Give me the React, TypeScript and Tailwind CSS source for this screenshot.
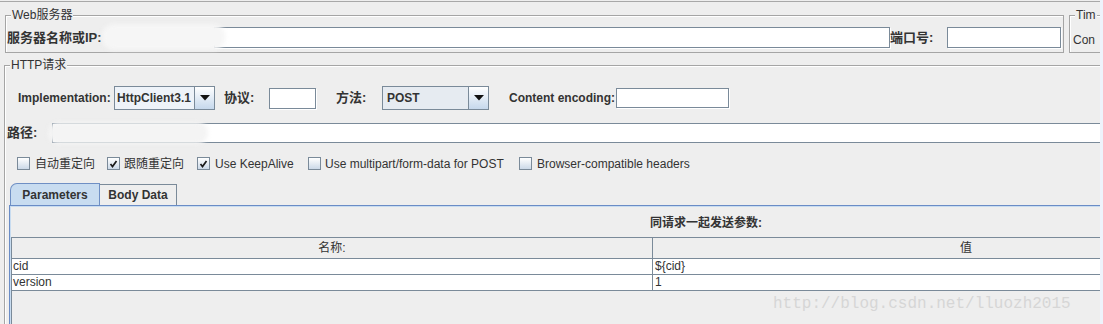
import React from "react";

function Check({ checked }: { checked?: boolean }) {
  return (
    <span className="w-[13px] h-[13px] border border-[#7a8a99] bg-linear-to-b from-white to-[#cbd9e8] flex items-center justify-center shrink-0">
      {checked && (
        <svg width="9" height="8" viewBox="0 0 9 8">
          <path d="M1.5 4 L3.5 6.5 L7.5 1" stroke="#1a1a1a" strokeWidth="1.7" fill="none" />
        </svg>
      )}
    </span>
  );
}

function Arrow() {
  return (
    <span className="w-[20px] h-full border-l border-[#7a8a99] bg-linear-to-b from-white to-[#c6d8ec] flex items-center justify-center shrink-0">
      <svg width="10" height="6" viewBox="0 0 10 6">
        <polygon points="0,0 10,0 5,5.5" fill="#111" />
      </svg>
    </span>
  );
}

export default function App() {
  return (
    <div className="w-[1103px] h-[324px] overflow-hidden bg-[#eeeeee] flex text-[#333333] text-[12px] font-[family-name:'Liberation_Sans','Noto_Sans_CJK_SC',sans-serif]">
      <div className="w-[1100px] h-full flex flex-col relative overflow-hidden">
        <div className="h-[2px] shrink-0 border-b border-[#a8a8a8]" />

        {/* Row 1 */}
        <div className="flex mt-[13px] shrink-0">
          <div className="ml-[5px] w-[1059px] h-[38px] border border-[#a5a5a5] shadow-[inset_1px_1px_0_#ffffff] relative">
            <span className="absolute -top-[8px] left-[5px] px-[1px] bg-[#eeeeee] leading-[14px]">Web服务器</span>
            <div className="flex items-center mt-[11px] h-[21px] relative">
              <span className="ml-[1px] w-[207px] font-bold whitespace-nowrap text-[13px]">服务器名称或IP:</span>
              <span className="w-[676px] h-[21px] bg-white border border-[#7a8a99] shadow-[1px_1px_0_#ffffff]" />
              <span className="w-[57px] font-bold whitespace-nowrap text-[13px]">端口号:</span>
              <span className="w-[114px] h-[21px] bg-white border border-[#7a8a99] shadow-[1px_1px_0_#ffffff]" />
              <span className="absolute left-[96px] -top-[3px] w-[123px] h-[26px] rounded-[12px] bg-[#f6f6f6] blur-[2px]" />
            </div>
          </div>
          <div className="ml-[5px] flex-1 h-[38px] border-l border-t border-b border-[#a5a5a5] shadow-[inset_1px_1px_0_#ffffff] relative">
            <span className="absolute -top-[8px] left-[5px] px-[1px] bg-[#eeeeee] leading-[14px] whitespace-nowrap">Tim</span>
            <div className="mt-[15px] ml-[3px] whitespace-nowrap">Con</div>
          </div>
        </div>

        {/* HTTP fieldset */}
        <div className="ml-[4px] mt-[12px] flex-1 border-l border-t border-[#a5a5a5] shadow-[inset_1px_1px_0_#ffffff] relative flex flex-col">
          <span className="absolute -top-[8px] left-[5px] px-[1px] bg-[#eeeeee] leading-[14px]">HTTP请求</span>

          {/* Implementation row */}
          <div className="flex items-center mt-[20px] h-[24px] shrink-0">
            <span className="ml-[13px] w-[96px] font-bold whitespace-nowrap">Implementation:</span>
            <span className="w-[101px] h-[24px] border border-[#7a8a99] flex bg-[#eef3f9]">
              <span className="flex-1 pl-[2px] font-bold leading-[22px] whitespace-nowrap">HttpClient3.1</span>
              <Arrow />
            </span>
            <span className="ml-[9px] w-[45px] font-bold whitespace-nowrap text-[13px]">协议:</span>
            <span className="w-[47px] h-[21px] bg-white border border-[#7a8a99] shadow-[1px_1px_0_#ffffff]" />
            <span className="ml-[20px] w-[46px] font-bold whitespace-nowrap text-[13px]">方法:</span>
            <span className="w-[107px] h-[24px] border border-[#7a8a99] flex bg-[#e6ebf1]">
              <span className="flex-1 pl-[4px] font-bold leading-[22px] whitespace-nowrap">POST</span>
              <Arrow />
            </span>
            <span className="ml-[20px] w-[107px] font-bold whitespace-nowrap">Content encoding:</span>
            <span className="w-[113px] h-[20px] bg-white border border-[#7a8a99] shadow-[1px_1px_0_#ffffff]" />
          </div>

          {/* Path row */}
          <div className="flex items-center mt-[13px] h-[20px] shrink-0 relative">
            <span className="ml-[2px] w-[45px] font-bold whitespace-nowrap text-[13px]">路径:</span>
            <span className="flex-1 h-[20px] bg-white border-t border-b border-l border-[#7a8a99]" />
            <span className="absolute left-[43px] -top-[1px] w-[160px] h-[22px] rounded-[11px] bg-[#f4f4f4] blur-[2px]" />
          </div>

          {/* Checkbox row */}
          <div className="flex items-center mt-[13px] h-[15px] shrink-0 whitespace-nowrap">
            <span className="ml-[12px] w-[90px] flex items-center gap-[5px]"><Check />自动重定向</span>
            <span className="w-[90px] flex items-center gap-[4px]"><Check checked />跟随重定向</span>
            <span className="w-[111px] flex items-center gap-[5px]"><Check checked />Use KeepAlive</span>
            <span className="w-[211px] flex items-center gap-[4px]"><Check />Use multipart/form-data for POST</span>
            <span className="flex items-center gap-[5px]"><Check />Browser-compatible headers</span>
          </div>

          {/* Tabs */}
          <div className="flex items-end mt-[12px] h-[22px] ml-[5px] shrink-0 relative z-10">
            <span className="w-[90px] h-[22px] bg-[#c8dcf0] border-t border-l border-r border-[#6f8fc4] rounded-tl-[7px] flex items-center justify-center font-bold">Parameters</span>
            <span className="w-[77px] h-[21px] bg-[#eeeeee] border-t border-r border-[#7a8a99] flex items-center justify-center font-bold">Body Data</span>
          </div>

          {/* Pane */}
          <div className="ml-[4px] flex-1 border-l border-t border-[#6a8cc6] shadow-[inset_1px_1px_0_#c8dcf0] flex flex-col">
            <div className="mt-[10px] ml-[640px] h-[14px] leading-[14px] font-bold whitespace-nowrap">同请求一起发送参数:</div>
            <div className="mt-[7px] ml-[1px] w-[1268px] flex-1 border-l border-t border-[#7a8a99] flex flex-col">
              <div className="flex h-[21px] border-b border-[#7a8a99]">
                <span className="w-[641px] border-r border-[#7a8a99] flex items-center justify-center">名称:</span>
                <span className="flex-1 flex items-center justify-center">值</span>
              </div>
              <div className="flex h-[16px] border-b border-[#7a8a99] bg-white">
                <span className="w-[641px] border-r border-[#7a8a99] pl-[1px] leading-[15px]">cid</span>
                <span className="flex-1 pl-[2px] leading-[15px]">{"${cid}"}</span>
              </div>
              <div className="flex h-[16px] border-b border-[#7a8a99] bg-white">
                <span className="w-[641px] border-r border-[#7a8a99] pl-[1px] leading-[15px]">version</span>
                <span className="flex-1 pl-[2px] leading-[15px]">1</span>
              </div>
            </div>
          </div>
        </div>

        <span className="absolute left-[773px] top-[294px] text-[16px] leading-[20px] text-[#d6d6d6] whitespace-nowrap font-[family-name:'Liberation_Mono',monospace]">http://blog.csdn.net/lluozh2015</span>
      </div>
      <div className="w-[3px] h-full bg-[#eef3fb]" />
    </div>
  );
}
